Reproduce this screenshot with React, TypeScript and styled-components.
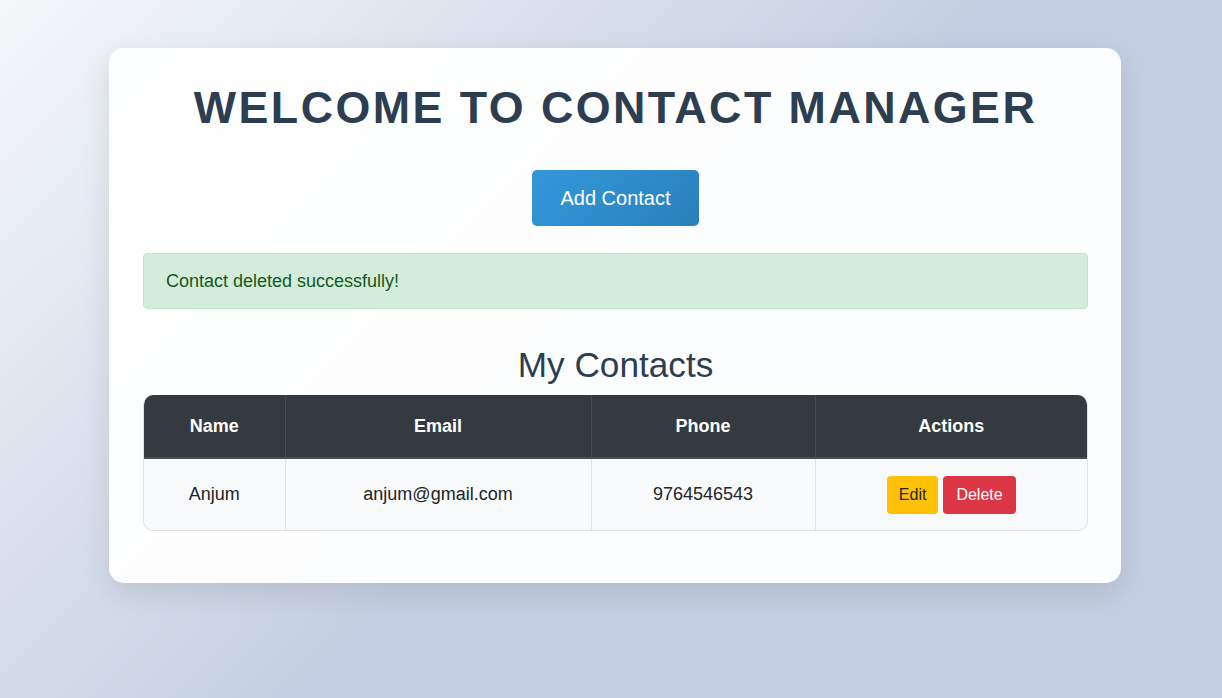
import React from "react";
import styled, { createGlobalStyle } from "styled-components";

const GlobalStyle = createGlobalStyle`
  * { box-sizing: border-box; }
  html, body { margin: 0; padding: 0; }
  body {
    font-family: "Liberation Sans", Arial, sans-serif;
    background: linear-gradient(135deg, #f5f7fa 0%, #c3cfe2 52%, #c3cfe2 100%);
    background-attachment: fixed;
    min-height: 100vh;
  }
`;

const Page = styled.div`
  min-height: 698px;
  padding: 48px 0 0 8px;
`;

const Card = styled.main`
  width: 1012px;
  margin: 0 auto;
  padding: 34px 33px 52px 34px;
  background: rgba(255, 255, 255, 0.95);
  border-radius: 15px;
  box-shadow: 0 10px 30px rgba(0, 0, 0, 0.1);
  display: flex;
  flex-direction: column;
  align-items: center;
`;

const Title = styled.h1`
  margin: 0 0 37px;
  font-size: 44.8px;
  font-weight: 700;
  letter-spacing: 2.45px;
  color: #2c3e50;
  text-transform: uppercase;
  text-align: center;
`;

const PrimaryButton = styled.button`
  height: 56px;
  padding: 0 28px;
  border: none;
  border-radius: 5px;
  background: linear-gradient(135deg, #3498db, #2980b9);
  color: #fff;
  font-family: inherit;
  font-size: 20px;
  cursor: pointer;
  margin-bottom: 27px;
`;

const Alert = styled.div`
  align-self: stretch;
  height: 56px;
  display: flex;
  align-items: center;
  padding: 0 22px;
  background: #d4edda;
  border: 1px solid #c3e6cb;
  border-radius: 4px;
  color: #155724;
  font-size: 18px;
  margin-bottom: 36px;
`;

const SectionTitle = styled.h2`
  margin: 0 0 10px;
  font-size: 35.2px;
  font-weight: 400;
  color: #2c3e50;
  text-align: center;
`;

const TableWrap = styled.div`
  align-self: stretch;
  border-radius: 10px;
  overflow: hidden;
  border: 1px solid #dee2e6;
  border-top: none;
`;

const Table = styled.table`
  width: 100%;
  border-collapse: collapse;
  table-layout: fixed;
  font-size: 18px;
`;

const HeadCell = styled.th<{ $w: number }>`
  width: ${(p) => p.$w}px;
  height: 63px;
  background: #343a40;
  color: #fff;
  font-weight: 700;
  text-align: center;
  vertical-align: middle;
  border-left: 1px solid #454d55;
  border-bottom: 2px solid #454d55;
  &:first-child { border-left: none; }
`;

const Row = styled.tr`
  background: #f8f9fa;
`;

const Cell = styled.td`
  height: 72px;
  padding: 16px;
  text-align: center;
  vertical-align: middle;
  color: #212529;
  border-left: 1px solid #dee2e6;
  &:first-child { border-left: none; }
`;

const Actions = styled.div`
  display: flex;
  justify-content: center;
  gap: 5px;
`;

const ActionButton = styled.button<{ $variant: "edit" | "delete" }>`
  height: 38px;
  padding: 0 ${(p) => (p.$variant === "edit" ? 12 : 13)}px;
  border: none;
  border-radius: 4px;
  font-family: inherit;
  font-size: 16px;
  cursor: pointer;
  background: ${(p) => (p.$variant === "edit" ? "#ffc107" : "#dc3545")};
  color: ${(p) => (p.$variant === "edit" ? "#212529" : "#fff")};
`;

const contacts = [{ name: "Anjum", email: "anjum@gmail.com", phone: "9764546543" }];

export default function App() {
  return (
    <>
      <GlobalStyle />
      <Page>
        <Card>
          <Title>Welcome to Contact Manager</Title>
          <PrimaryButton>Add Contact</PrimaryButton>
          <Alert>Contact deleted successfully!</Alert>
          <SectionTitle>My Contacts</SectionTitle>
          <TableWrap>
            <Table>
              <thead>
                <tr>
                  <HeadCell $w={141}>Name</HeadCell>
                  <HeadCell $w={306}>Email</HeadCell>
                  <HeadCell $w={224}>Phone</HeadCell>
                  <HeadCell $w={272}>Actions</HeadCell>
                </tr>
              </thead>
              <tbody>
                {contacts.map((c) => (
                  <Row key={c.email}>
                    <Cell>{c.name}</Cell>
                    <Cell>{c.email}</Cell>
                    <Cell>{c.phone}</Cell>
                    <Cell>
                      <Actions>
                        <ActionButton $variant="edit">Edit</ActionButton>
                        <ActionButton $variant="delete">Delete</ActionButton>
                      </Actions>
                    </Cell>
                  </Row>
                ))}
              </tbody>
            </Table>
          </TableWrap>
        </Card>
      </Page>
    </>
  );
}
